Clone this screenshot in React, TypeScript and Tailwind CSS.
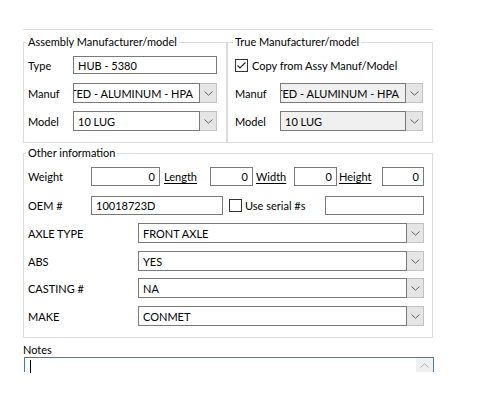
import type { ReactNode } from "react";

// WinForms-style "hub details" form: two group boxes on top, "Other information"
// below, then the first line of the Notes box (the window is clipped there).

const Chevron = ({ up = false, color = "#606060" }: { up?: boolean; color?: string }) => (
  <svg width="9" height="5" viewBox="0 0 9 5" className="block">
    <path
      d={up ? "M0.5 4.5 L4.5 0.8 L8.5 4.5" : "M0.5 0.5 L4.5 4.2 L8.5 0.5"}
      fill="none"
      stroke={color}
      strokeWidth="1"
    />
  </svg>
);

const CheckBox = ({ checked = false }: { checked?: boolean }) => (
  <div className="w-[13px] h-[13px] border border-[#333333] bg-white shrink-0 flex items-center justify-center">
    {checked && (
      <svg width="11" height="11" viewBox="0 0 11 11" className="block">
        <path d="M1.5 5.5 L4 8 L9.5 2.5" fill="none" stroke="#222222" strokeWidth="1.1" />
      </svg>
    )}
  </div>
);

const TextBox = ({
  value,
  width,
  height = 19,
  right = false,
}: {
  value: string;
  width: string;
  height?: number;
  right?: boolean;
}) => (
  <div
    className={`${width} ${height === 18 ? "h-[18px]" : "h-[19px]"} border border-[#7a7a7a] bg-white flex items-center px-[4px] shrink-0 ${
      right ? "justify-end" : ""
    }`}
  >
    <span className="whitespace-nowrap">{value}</span>
  </div>
);

// Editable combo box. `clipLeft` mimics a long value scrolled to its end.
const Combo = ({
  value,
  width,
  disabled = false,
  clipLeft = false,
}: {
  value: string;
  width: string;
  disabled?: boolean;
  clipLeft?: boolean;
}) => (
  <div className={`${width} h-[20px] flex shrink-0`}>
    <div
      className={`flex-1 min-w-0 border border-[#7a7a7a] flex items-center overflow-hidden ${
        disabled ? "bg-[#f0f0f0]" : "bg-white"
      } ${clipLeft ? "justify-end pr-[6px]" : "pl-[4px]"}`}
    >
      <span className="whitespace-nowrap shrink-0">{value}</span>
    </div>
    <div className="w-[17px] border-y border-r border-[#c2c2c2] bg-[#e5e5e5] flex items-center justify-center shrink-0">
      <Chevron />
    </div>
  </div>
);

const Group = ({
  title,
  className,
  children,
}: {
  title: string;
  className: string;
  children: ReactNode;
}) => (
  <fieldset className={`border border-[#dcdcdc] ${className}`}>
    <legend className="ml-[-2px] px-[2px] leading-[14px] h-[14px]">{title}</legend>
    {children}
  </fieldset>
);

const Link = ({ children, className }: { children: ReactNode; className: string }) => (
  <div className={`shrink-0 ${className}`}>
    <span className="underline underline-offset-2">{children}</span>
  </div>
);

const SELECT_ROWS = [
  { label: "AXLE TYPE", value: "FRONT AXLE", mt: "mt-[8px]" },
  { label: "ABS", value: "YES", mt: "mt-[8px]" },
  { label: "CASTING #", value: "NA", mt: "mt-[7px]" },
  { label: "MAKE", value: "CONMET", mt: "mt-[8px]" },
];

export default function App() {
  return (
    <div
      className="w-[500px] h-[400px] bg-white overflow-hidden text-[11px] leading-[15px] text-black"
      style={{ fontFamily: 'Lato, "Noto Sans", sans-serif' }}
    >
      <div className="ml-[23px] mt-[29px] w-[410px] border-t border-[#dcdcdc]" />

      <div className="ml-[23px] mt-[5px] flex">
        {/* ── ASSEMBLY MANUFACTURER ─────────────────────── */}
        <Group title="Assembly Manufacturer/model" className="w-[204px] h-[108px] pl-[4px] pr-[8px]">
          <div className="mt-[7px] flex items-center h-[18px]">
            <div className="w-[45px]">Type</div>
            <TextBox value="HUB - 5380" width="w-[144px]" height={18} />
          </div>
          <div className="mt-[9px] flex items-center">
            <div className="w-[45px]">Manuf</div>
            <Combo value="HUB PILOTED - ALUMINUM - HPA" width="w-[144px]" clipLeft />
          </div>
          <div className="mt-[8px] flex items-center">
            <div className="w-[45px]">Model</div>
            <Combo value="10 LUG" width="w-[144px]" />
          </div>
        </Group>

        {/* ── TRUE MANUFACTURER ─────────────────────────── */}
        <Group title="True Manufacturer/model" className="w-[206px] h-[108px] pl-[7px] pr-[8px]">
          <div className="mt-[7px] flex items-center h-[18px] gap-[4px]">
            <CheckBox checked />
            <span>Copy from Assy Manuf/Model</span>
          </div>
          <div className="mt-[9px] flex items-center">
            <div className="w-[45px]">Manuf</div>
            <Combo value="HUB PILOTED - ALUMINUM - HPA" width="w-[143px]" disabled clipLeft />
          </div>
          <div className="mt-[8px] flex items-center">
            <div className="w-[45px]">Model</div>
            <Combo value="10 LUG" width="w-[143px]" disabled />
          </div>
        </Group>
      </div>

      {/* ── OTHER INFORMATION ───────────────────────────── */}
      <Group title="Other information" className="ml-[23px] mt-[3px] w-[410px] h-[192px] pl-[4px] pr-[8px]">
        <div className="mt-[7px] flex items-center">
          <div className="w-[63px] shrink-0">Weight</div>
          <TextBox value="0" width="w-[69px]" right />
          <Link className="w-[50px] pl-[4px]">Length</Link>
          <TextBox value="0" width="w-[43px]" right />
          <Link className="w-[41px] pl-[3px]">Width</Link>
          <TextBox value="0" width="w-[43px]" right />
          <Link className="w-[45px] pl-[2px]">Height</Link>
          <TextBox value="0" width="w-[42px]" right />
        </div>
        <div className="mt-[10px] flex items-center">
          <div className="w-[63px] shrink-0">OEM #</div>
          <TextBox value="10018723D" width="w-[132px]" />
          <div className="ml-[6px] flex items-center gap-[3px]">
            <CheckBox />
            <span>Use serial #s</span>
          </div>
          <div className="ml-auto">
            <TextBox value="" width="w-[99px]" />
          </div>
        </div>
        {SELECT_ROWS.map((r) => (
          <div key={r.label} className={`${r.mt} flex items-center`}>
            <div className="w-[110px] shrink-0">{r.label}</div>
            <Combo value={r.value} width="w-[286px]" />
          </div>
        ))}
      </Group>

      {/* ── NOTES ───────────────────────────────────────── */}
      <div className="ml-[23px] mt-[4px] h-[15px]">Notes</div>
      <div className="ml-[24px] w-[410px] h-[15px] border border-b-0 border-[#3c7fb1] flex">
        <div className="ml-[5px] mt-[2px] w-px h-[13px] bg-black" />
        <div className="ml-auto w-[17px] h-[14px] bg-[#f0f0f0] flex items-center justify-center">
          <Chevron up color="#b0b0b0" />
        </div>
      </div>
    </div>
  );
}
